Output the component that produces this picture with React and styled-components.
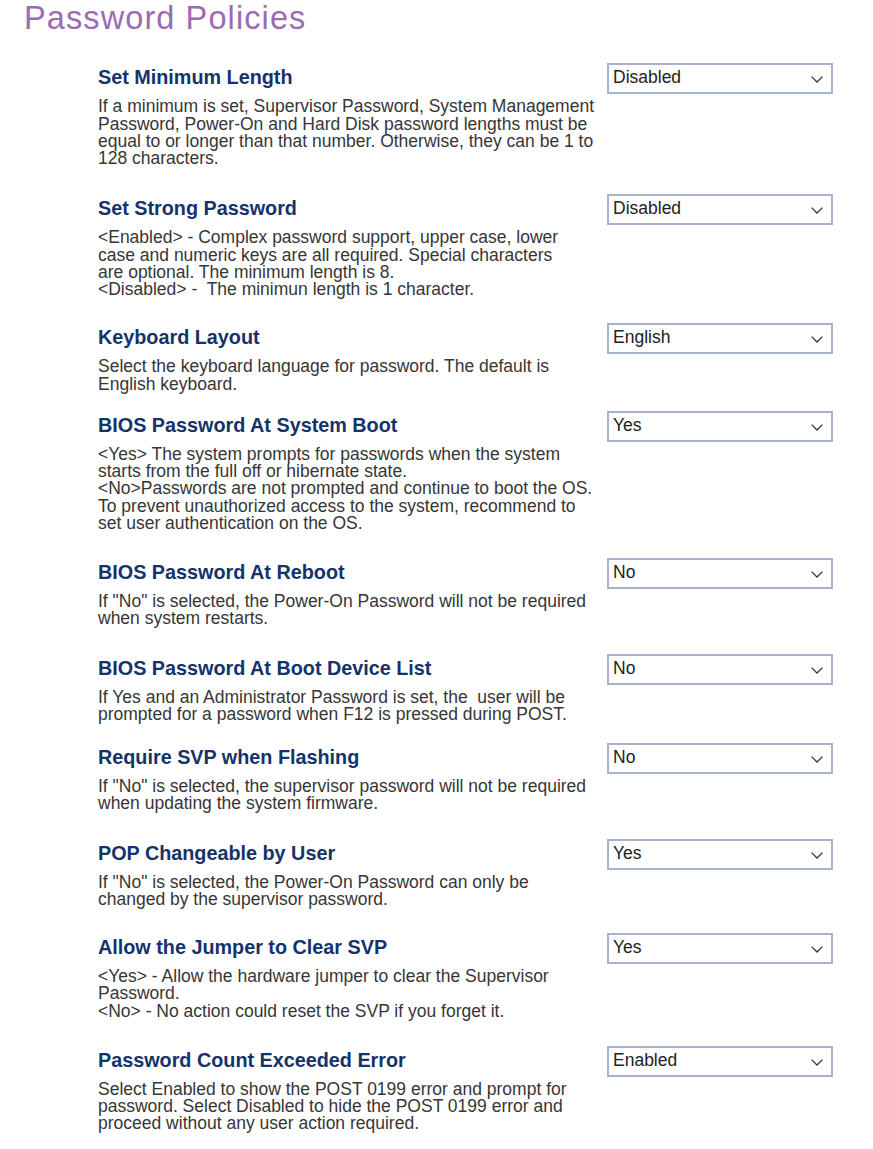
import React from "react";
import styled, { createGlobalStyle } from "styled-components";

const GlobalStyle = createGlobalStyle`
  html, body {
    margin: 0;
    padding: 0;
    background: #ffffff;
  }
  body {
    font-family: "Liberation Sans", Arial, sans-serif;
  }
`;

const policies = [
  {
    title: "Set Minimum Length",
    value: "Disabled",
    space: 30,
    lines: [
      "If a minimum is set, Supervisor Password, System Management",
      "Password, Power-On and Hard Disk password lengths must be",
      "equal to or longer than that number. Otherwise, they can be 1 to",
      "128 characters.",
    ],
  },
  {
    title: "Set Strong Password",
    value: "Disabled",
    space: 28,
    lines: [
      "<Enabled> - Complex password support, upper case, lower",
      "case and numeric keys are all required. Special characters",
      "are optional. The minimum length is 8.",
      "<Disabled> -  The minimun length is 1 character.",
    ],
  },
  {
    title: "Keyboard Layout",
    value: "English",
    space: 21,
    lines: [
      "Select the keyboard language for password. The default is",
      "English keyboard.",
    ],
  },
  {
    title: "BIOS Password At System Boot",
    value: "Yes",
    space: 29,
    lines: [
      "<Yes> The system prompts for passwords when the system",
      "starts from the full off or hibernate state.",
      "<No>Passwords are not prompted and continue to boot the OS.",
      "To prevent unauthorized access to the system, recommend to",
      "set user authentication on the OS.",
    ],
  },
  {
    title: "BIOS Password At Reboot",
    value: "No",
    space: 29,
    lines: [
      'If "No" is selected, the Power-On Password will not be required',
      "when system restarts.",
    ],
  },
  {
    title: "BIOS Password At Boot Device List",
    value: "No",
    space: 23,
    lines: [
      "If Yes and an Administrator Password is set, the  user will be",
      "prompted for a password when F12 is pressed during POST.",
    ],
  },
  {
    title: "Require SVP when Flashing",
    value: "No",
    space: 29,
    lines: [
      'If "No" is selected, the supervisor password will not be required',
      "when updating the system firmware.",
    ],
  },
  {
    title: "POP Changeable by User",
    value: "Yes",
    space: 28,
    lines: [
      'If "No" is selected, the Power-On Password can only be',
      "changed by the supervisor password.",
    ],
  },
  {
    title: "Allow the Jumper to Clear SVP",
    value: "Yes",
    space: 29,
    lines: [
      "<Yes> - Allow the hardware jumper to clear the Supervisor",
      "Password.",
      "<No> - No action could reset the SVP if you forget it.",
    ],
  },
  {
    title: "Password Count Exceeded Error",
    value: "Enabled",
    space: 0,
    lines: [
      "Select Enabled to show the POST 0199 error and prompt for",
      "password. Select Disabled to hide the POST 0199 error and",
      "proceed without any user action required.",
    ],
  },
];

const Page = styled.main`
  padding: 0 24px;
`;

const PageTitle = styled.h1`
  margin: 0 0 30px;
  font-family: "Liberation Sans", Arial, sans-serif;
  font-size: 32.5px;
  letter-spacing: 1.1px;
  line-height: 36.3px;
  font-weight: normal;
  color: #9b6bb4;
`;

const List = styled.div`
  padding-left: 74px;
`;

const Row = styled.section`
  display: grid;
  grid-template-columns: 509px 226px;
  align-items: start;
  margin-bottom: ${(p) => p.$space}px;
`;

const Heading = styled.h2`
  margin: 0;
  font-size: 19.8px;
  line-height: 22px;
  font-weight: bold;
  color: #14336a;
`;

const Description = styled.p`
  margin: 10px 0 0;
  font-size: 17.5px;
  line-height: 17.25px;
  color: #363636;
  white-space: pre;
`;

const SelectBox = styled.div`
  box-sizing: border-box;
  margin-top: -3px;
  width: 226px;
  height: 31px;
  border: 2px solid #a6b3cc;
  background: #ffffff;
  display: flex;
  align-items: flex-start;
  justify-content: space-between;
  padding: 0 8px 0 4px;
  font-size: 17.5px;
  line-height: 24px;
  color: #222222;
  cursor: pointer;
`;

const Chevron = styled.svg`
  margin-top: 11px;
  flex: none;
`;

function Select({ value }) {
  return (
    <SelectBox role="combobox" aria-label={value}>
      <span>{value}</span>
      <Chevron width="12" height="7" viewBox="0 0 12 7">
        <polyline
          points="0.6,0.6 6,6 11.4,0.6"
          fill="none"
          stroke="#333"
          strokeWidth="1.3"
        />
      </Chevron>
    </SelectBox>
  );
}

export default function App() {
  return (
    <Page>
      <GlobalStyle />
      <PageTitle>Password Policies</PageTitle>
      <List>
        {policies.map((item) => (
          <Row key={item.title} $space={item.space}>
            <div>
              <Heading>{item.title}</Heading>
              <Description>{item.lines.join("\n")}</Description>
            </div>
            <Select value={item.value} />
          </Row>
        ))}
      </List>
    </Page>
  );
}
